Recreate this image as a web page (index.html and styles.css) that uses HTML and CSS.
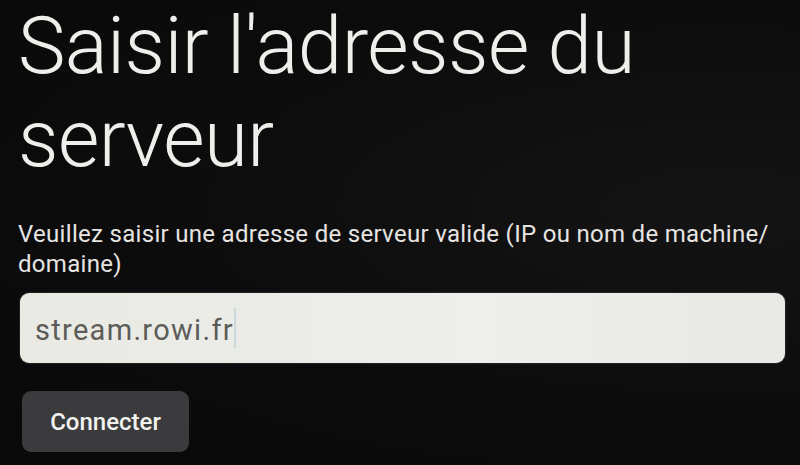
FILE: index.html
```html
<!DOCTYPE html>
<html lang="fr">
<head>
    <meta charset="UTF-8">
    <meta name="viewport" content="width=device-width, initial-scale=1.0">
    <title>Saisir l'adresse du serveur</title>
    <link rel="stylesheet" href="styles.css">
</head>
<body>

    <div class="server-screen">
        <h1 class="server-title">Saisir l'adresse du serveur</h1>

        <p class="server-hint">Veuillez saisir une adresse de serveur valide (IP ou nom de machine/ domaine)</p>

        <div class="server-input">
            <span class="server-value">stream.rowi.fr</span><span class="caret"></span>
        </div>

        <button type="button" class="connect-button">Connecter</button>
    </div>

</body>
</html>
```

FILE: styles.css
```css
/* General page styles */
body {
    margin: 0;
    padding: 0;
    background: radial-gradient(ellipse at 90% 45%, #151415 0%, #0d0c0d 55%, #0a090a 100%);
    color: #ecebe8;
    font-family: 'Roboto', 'Liberation Sans', sans-serif;
    height: 465px;
    overflow: hidden;
}

.server-screen {
    padding: 0 10px 0 18px;
}

/* Title */
.server-title {
    font-weight: 300;
    font-size: 80px;
    line-height: 93px;
    margin: 0;
    padding-top: 0;
    letter-spacing: -0.6px;
    color: #efeeeb;
}

/* Hint */
.server-hint {
    font-size: 24px;
    line-height: 30px;
    letter-spacing: 0.3px;
    margin: 33px 0 14px 0;
    color: #e6e5e2;
    width: 775px;
}

/* Input */
.server-input {
    display: flex;
    align-items: center;
    width: 765px;
    height: 70px;
    margin-left: 2px;
    box-sizing: border-box;
    padding-left: 15px;
    background: linear-gradient(90deg, #e9eae4 0%, #eeeeea 60%, #e8e8e4 100%);
    border-radius: 9px;
    box-shadow: 0 0 2px rgba(255, 255, 255, 0.3);
}

.server-value {
    font-size: 29px;
    color: #5c5c59;
    letter-spacing: 1.3px;
    padding-top: 3px;
}

.caret {
    display: inline-block;
    width: 2px;
    height: 40px;
    background-color: #c8d8dc;
}

/* Connect button */
.connect-button {
    display: block;
    margin: 28px 0 0 4px;
    width: 167px;
    height: 61px;
    background-color: #3b3a3c;
    color: #f2f2f0;
    border: none;
    border-radius: 9px;
    font-family: 'Roboto', 'Liberation Sans', sans-serif;
    font-size: 24px;
    font-weight: 500;
}
```
